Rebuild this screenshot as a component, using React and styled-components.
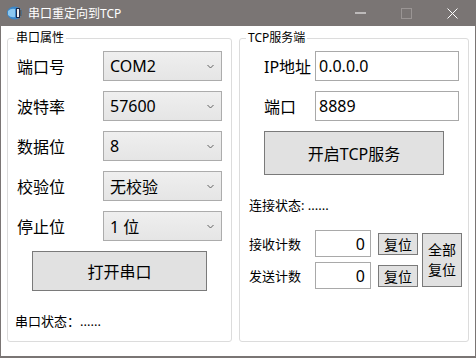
import React from 'react'
import styled, { createGlobalStyle } from 'styled-components'

const Global = createGlobalStyle`
  html, body { margin: 0; padding: 0; background: #fff; }
  body { font-family: "Noto Sans", "Noto Sans CJK SC", sans-serif; }
`

const Win = styled.div`
  width: 476px;
  height: 358px;
  box-sizing: border-box;
  border: 1px solid #7a7574;
  border-top: none;
  border-bottom-width: 2px;
  display: flex;
  flex-direction: column;
  background: #fff;
`
const TitleBar = styled.div`
  height: 26px;
  background: #7a7574;
  display: flex;
  align-items: center;
  color: #fff;
  font-size: 12px;
  padding-left: 5px;
`
const TitleText = styled.span`
  margin-left: 5px;
  flex: 1;
`
const Ctrl = styled.div`
  width: 46px;
  height: 26px;
  display: flex;
  align-items: center;
  justify-content: center;
`
const Body = styled.div`
  flex: 1;
  display: flex;
  gap: 7px;
  padding: 5px 0 0 6px;
`
const Group = styled.fieldset`
  margin: 0;
  width: ${p => p.$w}px;
  height: 311px;
  box-sizing: border-box;
  border: 1px solid #dcdcdc;
  border-radius: 3px;
  padding: 6px 9px 0 9px;
  min-width: 0;
`
const Legend = styled.legend`
  font-size: 12px;
  line-height: 14px;
  padding: 0 2px;
  margin-left: -3px;
  color: #000;
`
const FormRow = styled.div`
  display: flex;
  align-items: center;
  height: 30px;
  margin-bottom: 10px;
  padding-left: ${p => p.$indent || 0}px;
`
const Label = styled.div`
  width: ${p => p.$w}px;
  font-size: 16px;
  color: #000;
`
const Combo = styled.div`
  width: 119px;
  height: 30px;
  box-sizing: border-box;
  border: 1px solid #acacac;
  background: linear-gradient(#efefef, #e5e5e5);
  display: flex;
  align-items: center;
  padding: 0 7px 0 6px;
  font-size: 16px;
  color: #000;
`
const ComboText = styled.span`
  flex: 1;
`
const TextBox = styled.div`
  width: ${p => p.$w}px;
  height: ${p => p.$h}px;
  box-sizing: border-box;
  border: 1px solid #a9a9a9;
  background: #fff;
  display: flex;
  align-items: center;
  justify-content: ${p => (p.$right ? 'flex-end' : 'flex-start')};
  padding: 0 5px 0 3px;
  font-size: 16px;
  color: #000;
`
const Button = styled.div`
  width: ${p => p.$w}px;
  height: ${p => p.$h}px;
  box-sizing: border-box;
  border: 1px solid #7a7a7a;
  background: #e1e1e1;
  display: flex;
  align-items: center;
  justify-content: center;
  text-align: center;
  font-size: ${p => p.$fs || 16}px;
  line-height: ${p => p.$lh || 'normal'};
  color: #000;
  margin: ${p => p.$m || 0};
`
const AllReset = styled(Button)`
  grid-column: 4;
  grid-row: 1 / span 2;
  align-self: start;
  margin-top: 3px;
`
const Status = styled.div`
  font-size: 13px;
  color: #000;
  margin: ${p => p.$m};
`
const Counters = styled.div`
  display: grid;
  grid-template-columns: 66px 63px 44px 40px;
  grid-template-rows: 27px 27px;
  row-gap: 5px;
  align-items: center;
  margin-top: 16px;
`
const SmallLabel = styled.div`
  font-size: 13px;
  color: #000;
`
const Cell = styled.div`
  grid-column: ${p => p.$col};
  grid-row: ${p => p.$row};
  display: flex;
  align-items: center;
`

const Chevron = () => (
  <svg width="7" height="5" viewBox="0 0 7 5">
    <path d="M0.5 1 L3.5 4 L6.5 1" fill="none" stroke="#606060" strokeWidth="1" />
  </svg>
)

const AppIcon = () => (
  <svg width="17" height="16" viewBox="0 0 17 16">
    <ellipse cx="8.5" cy="8" rx="7.5" ry="6.5" fill="#3a86c8" />
    <path d="M2 6 Q5 3 9 4 L9 12 Q5 13 2 10 Z" fill="#8cc8f0" />
    <rect x="10" y="3" width="4" height="10" fill="#1d2b4a" />
    <rect x="11" y="4" width="2" height="8" fill="#f0f0f0" />
    <rect x="14" y="5" width="1.5" height="6" fill="#5a5a5a" />
  </svg>
)

const combos = [
  ['端口号', 'COM2'],
  ['波特率', '57600'],
  ['数据位', '8'],
  ['校验位', '无校验'],
  ['停止位', '1 位'],
]

export default function App() {
  return (
    <>
      <Global />
      <Win>
        <TitleBar>
          <AppIcon />
          <TitleText>串口重定向到TCP</TitleText>
          <Ctrl>
            <svg width="11" height="2"><rect width="11" height="1" y="0.5" fill="#fff" /></svg>
          </Ctrl>
          <Ctrl>
            <svg width="11" height="11"><rect x="0.5" y="0.5" width="10" height="10" fill="none" stroke="#9a9594" /></svg>
          </Ctrl>
          <Ctrl>
            <svg width="11" height="11"><path d="M0.5 0.5 L10.5 10.5 M10.5 0.5 L0.5 10.5" stroke="#fff" strokeWidth="1" /></svg>
          </Ctrl>
        </TitleBar>
        <Body>
          <Group $w={225}>
            <Legend>串口属性</Legend>
            {combos.map(([l, v]) => (
              <FormRow key={l}>
                <Label $w={86}>{l}</Label>
                <Combo>
                  <ComboText>{v}</ComboText>
                  <Chevron />
                </Combo>
              </FormRow>
            ))}
            <Button $w={175} $h={40} $m="5px 0 0 15px">打开串口</Button>
            <Status $m="20px 0 0 -2px">串口状态：......</Status>
          </Group>
          <Group $w={230}>
            <Legend>TCP服务端</Legend>
            <FormRow $indent={15}>
              <Label $w={51}>IP地址</Label>
              <TextBox $w={144} $h={30}>0.0.0.0</TextBox>
            </FormRow>
            <FormRow $indent={15}>
              <Label $w={51}>端口</Label>
              <TextBox $w={144} $h={30}>8889</TextBox>
            </FormRow>
            <Button $w={180} $h={44} $m="5px 0 0 15px">开启TCP服务</Button>
            <Status $m="20px 0 0 0">连接状态: ......</Status>
            <Counters>
              <Cell $col={1} $row={1}><SmallLabel>接收计数</SmallLabel></Cell>
              <Cell $col={2} $row={1}><TextBox $w={56} $h={27} $right>0</TextBox></Cell>
              <Cell $col={3} $row={1}><Button $w={40} $h={22} $fs={14}>复位</Button></Cell>
              <Cell $col={1} $row={2}><SmallLabel>发送计数</SmallLabel></Cell>
              <Cell $col={2} $row={2}><TextBox $w={56} $h={27} $right>0</TextBox></Cell>
              <Cell $col={3} $row={2}><Button $w={40} $h={22} $fs={14}>复位</Button></Cell>
              <AllReset $w={40} $h={54} $fs={14} $lh="20px">全部<br />复位</AllReset>
            </Counters>
          </Group>
        </Body>
      </Win>
    </>
  )
}
